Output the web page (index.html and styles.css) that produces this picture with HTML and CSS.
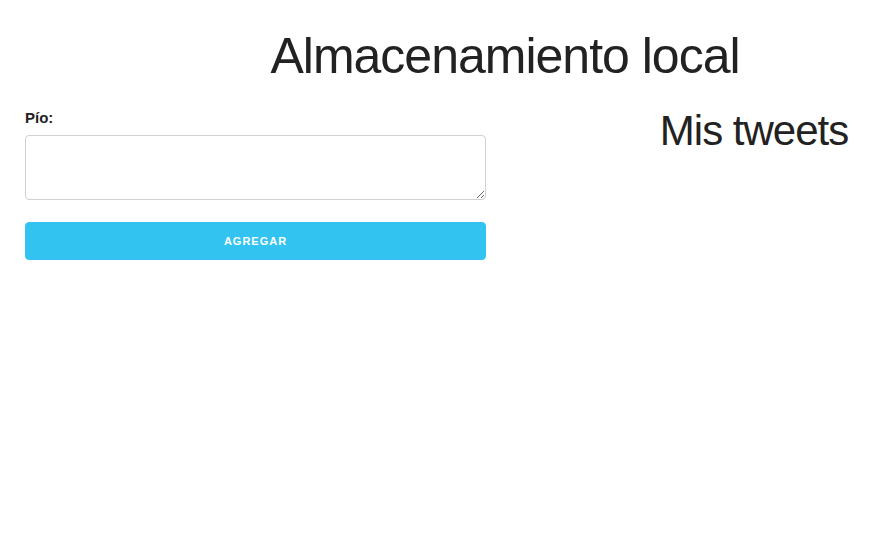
FILE: index.html
```html
<!DOCTYPE html>
<html lang="es">
<head>
<meta charset="utf-8">
<title>Almacenamiento local</title>
<link rel="stylesheet" href="styles.css">
</head>
<body>
  <header class="header">
    <h1 class="title">Almacenamiento local</h1>
  </header>
  <main class="row">
    <section class="form-col">
      <form class="tweet-form">
        <label class="label" for="tweet">Pío:</label>
        <textarea id="tweet" class="textarea"></textarea>
        <button type="button" class="button-primary">Agregar</button>
      </form>
    </section>
    <section class="list-col">
      <h2 class="subtitle">Mis tweets</h2>
    </section>
  </main>
</body>
</html>
```
FILE: styles.css
```css
html { font-size: 62.5%; }
body {
  margin: 0;
  font-family: "Liberation Sans", Arial, sans-serif;
  font-size: 1.5em;
  line-height: 1.6;
  color: #222;
  background: #fff;
}
.header {
  padding: 26px 0 0 130px;
  text-align: center;
}
.title {
  margin: 0;
  font-size: 50px;
  line-height: 1.2;
  font-weight: 300;
  letter-spacing: -1px;
}
.row {
  display: flex;
  padding: 0 0 0 25px;
  margin-top: 20px;
}
.form-col {
  width: 461px;
  flex: none;
}
.tweet-form {
  display: flex;
  flex-direction: column;
}
.label {
  display: block;
  font-weight: 700;
  margin-bottom: 5px;
  color: #222;
}
.textarea {
  display: block;
  box-sizing: border-box;
  width: 100%;
  height: 65px;
  min-height: 65px;
  padding: 6px 10px;
  border: 1px solid #d1d1d1;
  border-radius: 4px;
  background: #fff;
  margin: 0 0 22px;
  font-family: inherit;
}
.button-primary {
  display: block;
  box-sizing: border-box;
  width: 100%;
  height: 38px;
  padding: 1px 30px 0;
  border: 1px solid #33c3f0;
  border-radius: 4px;
  background: #33c3f0;
  color: #fff;
  font-family: inherit;
  font-size: 11px;
  font-weight: 700;
  letter-spacing: 1px;
  text-transform: uppercase;
  line-height: 35px;
  cursor: pointer;
}
.list-col {
  flex: 1;
  text-align: center;
  padding-left: 142px;
}
.subtitle {
  margin: -1px 0 0;
  font-size: 42px;
  line-height: 1.25;
  font-weight: 300;
  letter-spacing: -1px;
}
```
